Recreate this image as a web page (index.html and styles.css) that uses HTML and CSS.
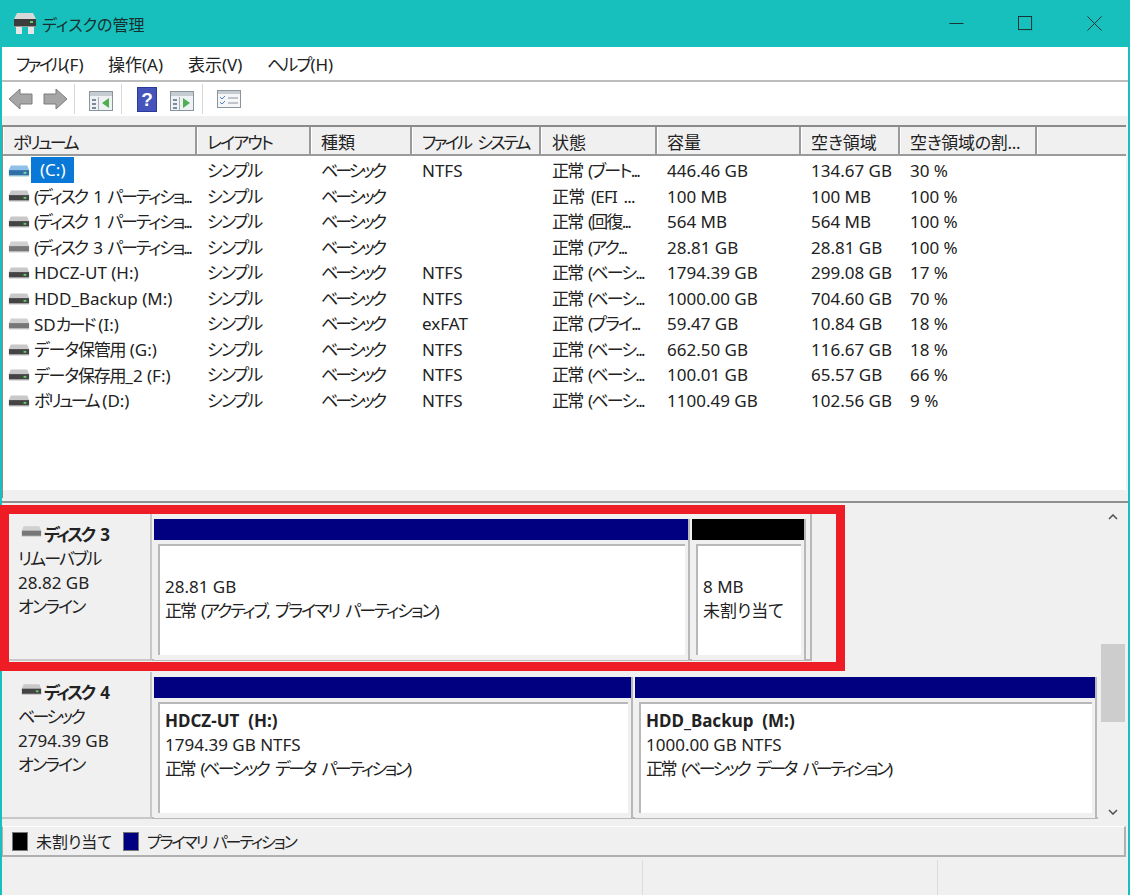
FILE: index.html
```html
<!DOCTYPE html>
<html lang="ja">
<head>
  <meta charset="UTF-8">
  <title>ディスクの管理</title>
  <link rel="stylesheet" href="styles.css">
</head>
<body>
  <svg class="defs" width="0" height="0">
    <symbol id="drive" viewBox="0 0 24 12">
      <path d="M3 0H21L23 5H1Z" fill="#c8c8c8"/>
      <rect x="1" y="5" width="22" height="6" fill="#444"/>
      <rect x="17" y="7" width="3" height="2" fill="#5fd35f"/>
      <rect x="1" y="11" width="22" height="1" fill="#bbb"/>
    </symbol>
    <symbol id="drive-blue" viewBox="0 0 24 12">
      <path d="M3 0H21L23 5H1Z" fill="#8fc0e8"/>
      <rect x="1" y="5" width="22" height="6" fill="#2f6ea8"/>
      <rect x="17" y="7" width="3" height="2" fill="#7fe0a0"/>
      <rect x="1" y="11" width="22" height="1" fill="#9cc"/>
    </symbol>
    <symbol id="drive-gray" viewBox="0 0 24 12">
      <path d="M3 0H21L23 5H1Z" fill="#d0d0d0"/>
      <rect x="1" y="5" width="22" height="6" fill="#777"/>
      <rect x="1" y="11" width="22" height="1" fill="#ccc"/>
    </symbol>
    <symbol id="panel" viewBox="0 0 24 20">
      <rect x="0.5" y="0.5" width="23" height="19" fill="#eef2f5" stroke="#8a949c"/>
      <rect x="1" y="1" width="22" height="4" fill="#c4ccd2"/>
      <rect x="3" y="8" width="4" height="2" fill="#7d8c9c"/>
      <rect x="3" y="12" width="4" height="2" fill="#7d8c9c"/>
      <rect x="3" y="16" width="4" height="2" fill="#7d8c9c"/>
      <rect x="9" y="6" width="1" height="13" fill="#a8b0b6"/>
    </symbol>
  </svg>

  <div class="window">
    <header class="titlebar">
      <svg class="app-icon" viewBox="0 0 24 21">
        <path d="M4 0H20L23 6H1Z" fill="#d8d8d8"/>
        <rect x="1" y="6" width="22" height="7" fill="#3c3c3c"/>
        <rect x="17" y="8" width="3" height="2" fill="#5fd35f"/>
        <rect x="1" y="13" width="22" height="1" fill="#999"/>
        <rect x="3" y="14" width="6" height="7" fill="#e6e6e6"/>
        <rect x="15" y="14" width="6" height="7" fill="#e6e6e6"/>
      </svg>
      <span class="title-text">ディスクの管理</span>
      <div class="window-btns">
        <svg viewBox="0 0 16 16"><path d="M0.5 8H15.5" stroke="#1b2a2a" fill="none"/></svg>
        <svg viewBox="0 0 16 16"><rect x="0.5" y="0.5" width="14" height="14" stroke="#1b2a2a" fill="none"/></svg>
        <svg viewBox="0 0 16 16"><path d="M0.5 0.5L15.5 15.5M15.5 0.5L0.5 15.5" stroke="#1b2a2a" fill="none"/></svg>
      </div>
    </header>

    <nav class="menubar">
      <span class="menu-item menu-file"><i class="t3">ファイル</i>(F)</span>
      <span class="menu-item menu-action">操作(A)</span>
      <span class="menu-item menu-view">表示(V)</span>
      <span class="menu-item"><i class="t2">ヘルプ</i>(H)</span>
    </nav>

    <div class="toolbar">
      <svg class="tool-arrow" viewBox="0 0 25 22"><path d="M1 11L12 1V6H24V16H12V21Z" fill="#a6a6a6" stroke="#7c7c7c"/></svg>
      <svg class="tool-arrow tool-next" viewBox="0 0 25 22"><path d="M24 11L13 1V6H1V16H13V21Z" fill="#a6a6a6" stroke="#7c7c7c"/></svg>
      <span class="tool-sep sep-a"></span>
      <svg class="tool-panel"><use href="#panel"/><path d="M20 7V17L13 12Z" fill="#4fae4f"/></svg>
      <span class="tool-sep sep-b"></span>
      <svg class="tool-help" viewBox="0 0 20 25">
        <rect width="20" height="25" fill="#2a3a96"/>
        <rect x="1" y="1" width="18" height="23" fill="#4454bc"/>
        <text x="10" y="19" class="help-mark">?</text>
      </svg>
      <svg class="tool-panel tool-panel-2"><use href="#panel"/><path d="M13 7V17L20 12Z" fill="#4fae4f"/></svg>
      <span class="tool-sep sep-c"></span>
      <svg class="tool-list" viewBox="0 0 24 18">
        <rect x="0.5" y="0.5" width="23" height="17" fill="#f4f6f8" stroke="#8a949c"/>
        <rect x="1" y="1" width="22" height="3" fill="#c4ccd2"/>
        <path d="M3 7L5 9L8 6M3 12L5 14L8 11" stroke="#4a7fc0" fill="none"/>
        <path d="M11 8H21M11 13H21" stroke="#8a949c"/>
      </svg>
    </div>
    <div class="toolbar-gap"></div>

    <section class="volume-list">
      <div class="list-head">
        <span class="t3">ボリューム</span><span class="t2">レイアウト</span><span>種類</span><span class="t3">ファイル システム</span><span class="head-state">状態</span><span>容量</span><span>空き領域</span><span class="t0">空き領域の割...</span><span></span>
      </div>
      <div class="list-row">
        <span class="vol"><svg class="drive-icon"><use href="#drive-blue"/></svg><b class="selected">(C:)</b></span><span>シンプル</span><span>ベーシック</span><span>NTFS</span><span>正常 (ブート...</span><span>446.46 GB</span><span>134.67 GB</span><span>30 %</span>
      </div>
      <div class="list-row">
        <span class="vol t2x"><svg class="drive-icon"><use href="#drive"/></svg>(ディスク 1 パーティショ...</span><span>シンプル</span><span>ベーシック</span><span></span><span class="state-latin">正常 (EFI ...</span><span>100 MB</span><span>100 MB</span><span>100 %</span>
      </div>
      <div class="list-row">
        <span class="vol t2x"><svg class="drive-icon"><use href="#drive"/></svg>(ディスク 1 パーティショ...</span><span>シンプル</span><span>ベーシック</span><span></span><span>正常 (回復...</span><span>564 MB</span><span>564 MB</span><span>100 %</span>
      </div>
      <div class="list-row">
        <span class="vol t2x"><svg class="drive-icon"><use href="#drive-gray"/></svg>(ディスク 3 パーティショ...</span><span>シンプル</span><span>ベーシック</span><span></span><span>正常 (アク...</span><span>28.81 GB</span><span>28.81 GB</span><span>100 %</span>
      </div>
      <div class="list-row">
        <span class="vol"><svg class="drive-icon"><use href="#drive"/></svg>HDCZ-UT (H:)</span><span>シンプル</span><span>ベーシック</span><span>NTFS</span><span>正常 (ベーシ...</span><span>1794.39 GB</span><span>299.08 GB</span><span>17 %</span>
      </div>
      <div class="list-row">
        <span class="vol"><svg class="drive-icon"><use href="#drive"/></svg>HDD_Backup (M:)</span><span>シンプル</span><span>ベーシック</span><span>NTFS</span><span>正常 (ベーシ...</span><span>1000.00 GB</span><span>704.60 GB</span><span>70 %</span>
      </div>
      <div class="list-row">
        <span class="vol"><svg class="drive-icon"><use href="#drive-gray"/></svg><em class="vol-name">SD<i class="t3">カード</i> (I:)</em></span><span>シンプル</span><span>ベーシック</span><span>exFAT</span><span>正常 (プライ...</span><span>59.47 GB</span><span>10.84 GB</span><span>18 %</span>
      </div>
      <div class="list-row">
        <span class="vol"><svg class="drive-icon"><use href="#drive"/></svg><em class="vol-name"><i class="t1">データ保管用</i> (G:)</em></span><span>シンプル</span><span>ベーシック</span><span>NTFS</span><span>正常 (ベーシ...</span><span>662.50 GB</span><span>116.67 GB</span><span>18 %</span>
      </div>
      <div class="list-row">
        <span class="vol"><svg class="drive-icon"><use href="#drive"/></svg><em class="vol-name"><i class="t1">データ保存用</i>_2 (F:)</em></span><span>シンプル</span><span>ベーシック</span><span>NTFS</span><span>正常 (ベーシ...</span><span>100.01 GB</span><span>65.57 GB</span><span>66 %</span>
      </div>
      <div class="list-row">
        <span class="vol"><svg class="drive-icon"><use href="#drive"/></svg><em class="vol-name"><i class="t3">ボリューム</i> (D:)</em></span><span>シンプル</span><span>ベーシック</span><span>NTFS</span><span>正常 (ベーシ...</span><span>1100.49 GB</span><span>102.56 GB</span><span>9 %</span>
      </div>
      <div class="list-foot"></div>
    </section>

    <section class="disk-pane">
      <div class="disks">
        <div class="disk disk-removable">
          <div class="disk-label">
            <div class="disk-name t3"><svg class="disk-icon"><use href="#drive-gray"/></svg>ディスク 3</div>
            <div class="t2">リムーバブル</div>
            <div>28.82 GB</div>
            <div class="t2">オンライン</div>
          </div>
          <div class="disk-parts">
            <div class="part part-c1">
              <div class="part-bar"></div>
              <div class="part-body part-center">
                <div>28.81 GB</div>
                <div class="t2x">正常 (アクティブ, プライマリ パーティション)</div>
              </div>
            </div>
            <div class="part part-c2">
              <div class="part-bar part-black"></div>
              <div class="part-body part-center">
                <div>8 MB</div>
                <div>未割り当て</div>
              </div>
            </div>
          </div>
        </div>
        <div class="disk disk-basic">
          <div class="disk-label">
            <div class="disk-name t3"><svg class="disk-icon"><use href="#drive"/></svg>ディスク 4</div>
            <div class="t3">ベーシック</div>
            <div>2794.39 GB</div>
            <div class="t2">オンライン</div>
          </div>
          <div class="disk-parts">
            <div class="part part-d1">
              <div class="part-bar"></div>
              <div class="part-body">
                <div class="part-name">HDCZ-UT &nbsp;(H:)</div>
                <div>1794.39 GB NTFS</div>
                <div class="t3">正常 (ベーシック データ パーティション)</div>
              </div>
            </div>
            <div class="part part-d2">
              <div class="part-bar"></div>
              <div class="part-body">
                <div class="part-name">HDD_Backup &nbsp;(M:)</div>
                <div>1000.00 GB NTFS</div>
                <div class="t3">正常 (ベーシック データ パーティション)</div>
              </div>
            </div>
          </div>
        </div>
      </div>
      <div class="scrollbar">
        <svg class="scroll-arrow" viewBox="0 0 10 6"><path d="M1 5L5 1L9 5" fill="none" stroke="#555" stroke-width="1.6"/></svg>
        <div class="scroll-thumb"></div>
        <svg class="scroll-arrow scroll-down" viewBox="0 0 10 6"><path d="M1 1L5 5L9 1" fill="none" stroke="#555" stroke-width="1.6"/></svg>
      </div>
    </section>

    <div class="legend">
      <span class="swatch swatch-black"></span><span class="legend-text">未割り当て</span>
      <span class="swatch swatch-blue"></span><span class="t2x">プライマリ パーティション</span>
    </div>

    <footer class="statusbar">
      <span class="status-cell status-1"></span>
      <span class="status-cell status-2"></span>
      <span class="status-cell"></span>
    </footer>
  </div>

  <div class="highlight"></div>
</body>
</html>
```

FILE: styles.css
```css
* {
  box-sizing: border-box;
}
html, body {
  margin: 0;
  height: 895px;
  overflow: hidden;
}
body {
  position: relative;
  background: #17c0bc;
  color: #222;
  font-family: "Noto Sans", "Noto Sans CJK JP", sans-serif;
  font-size: 17px;
  font-feature-settings: "palt";
}
i, em {
  font-style: normal;
}
.defs {
  position: absolute;
}
.window {
  display: flex;
  flex-direction: column;
  height: 895px;
  border-left: 2px solid #17c0bc;
  border-right: 2px solid #17c0bc;
  background: #f0f0f0;
}

/* kana in the original font runs much narrower than Noto */
.t0 {
  letter-spacing: -0.3px;
}
.t1 {
  letter-spacing: -1.2px;
  word-spacing: 3px;
}
.t2 {
  letter-spacing: -1.8px;
  word-spacing: 4px;
}
.t2x {
  letter-spacing: -2.1px;
  word-spacing: 4px;
}
.t3 {
  letter-spacing: -2.6px;
  word-spacing: 5px;
}

/* title */
.titlebar {
  display: flex;
  align-items: center;
  height: 47px;
  padding-left: 11px;
  background: #17c0bc;
  color: #17302f;
  flex: none;
}
.app-icon {
  width: 24px;
  height: 21px;
}
.title-text {
  margin-left: 5px;
  font-size: 16px;
}
.window-btns {
  display: flex;
  margin-left: auto;
  gap: 54px;
  padding-right: 26px;
  align-items: center;
}
.window-btns svg {
  width: 15px;
  height: 15px;
}

/* menu */
.menubar {
  display: flex;
  align-items: center;
  height: 35px;
  padding: 0 0 1px 14px;
  background: #fff;
  border-bottom: 2px solid #bdbdbd;
  flex: none;
}
.menu-file {
  width: 92px;
}
.menu-action {
  width: 80px;
}
.menu-view {
  width: 79px;
}

/* toolbar */
.toolbar {
  display: flex;
  align-items: center;
  height: 34px;
  padding-left: 6px;
  background: #fff;
  flex: none;
}
.tool-arrow {
  width: 25px;
  height: 22px;
}
.tool-next {
  margin-left: 10px;
}
.tool-sep {
  width: 1px;
  height: 30px;
  background: #d8d8d8;
}
.sep-a {
  margin-left: 6px;
}
.tool-panel {
  width: 24px;
  height: 20px;
  margin: 4px 0 0 14px;
}
.sep-b {
  margin-left: 8px;
}
.tool-help {
  width: 20px;
  height: 25px;
  margin-left: 15px;
}
.tool-panel-2 {
  margin-left: 13px;
}
.sep-c {
  margin-left: 8px;
}
.tool-list {
  width: 24px;
  height: 18px;
  margin-left: 14px;
}
.help-mark {
  fill: #fff;
  font-family: "Liberation Sans", sans-serif;
  font-size: 19px;
  font-weight: bold;
  text-anchor: middle;
}
.toolbar-gap {
  height: 9px;
  background: #f0f0f0;
  flex: none;
}

/* volume list */
.volume-list {
  display: flex;
  flex-direction: column;
  height: 373px;
  margin-right: 2px;
  padding-left: 2px;
  background: #fff;
  border-left: 1px solid #8c8c8c;
  flex: none;
}
.list-head, .list-row {
  display: grid;
  grid-template-columns: 192px 114px 101px 129px 116px 144px 99px 137px 1fr;
}
.list-head {
  grid-template-columns: 194px 114px 101px 129px 116px 144px 99px 137px 1fr;
  height: 31px;
  margin: 0 0 2px -2px;
  border-top: 2px solid #8a8a8a;
  border-bottom: 2px solid #9a9a9a;
  background: #f0f0f0;
  flex: none;
}
.list-head span {
  padding: 4px 0 0 9px;
  border-right: 2px solid #9a9a9a;
  border-left: 1px solid #fff;
  white-space: nowrap;
  overflow: hidden;
  line-height: 24px;
}
.list-head span:last-child {
  border-right: none;
}
.list-head .head-state {
  padding-left: 10px;
}
.list-row {
  height: 25.55px;
  line-height: 25px;
  flex: none;
}
.list-row span {
  padding-left: 10px;
  white-space: nowrap;
}
.list-row span:nth-child(2) {
  letter-spacing: -1.9px;
}
.list-row span:nth-child(3) {
  letter-spacing: -3px;
}
.list-row span:nth-child(5) {
  padding-left: 11px;
  letter-spacing: -1.8px;
  word-spacing: 3px;
}
.list-row .state-latin:nth-child(5) {
  letter-spacing: -0.8px;
}
.list-row .vol {
  display: flex;
  align-items: center;
  padding-left: 3px;
}
.vol-name {
  white-space: pre;
}
.list-foot {
  height: 8px;
  margin: auto 0 0 -2px;
  background: #f0f0f0;
  flex: none;
}
.drive-icon {
  width: 22px;
  height: 12px;
  margin-right: 4px;
  flex: none;
}
.selected {
  font-weight: normal;
  background: #0a78d7;
  color: #fff;
  height: 26px;
  margin: -1px 0 0 -3px;
  padding: 0 8px 0 9px;
}

/* lower pane */
.disk-pane {
  display: flex;
  height: 325px;
  margin-top: 3px;
  border-top: 2px solid #8f8f8f;
  background: #f0f0f0;
  flex: none;
}
.disks {
  width: 1096px;
}
.disk {
  display: flex;
  height: 147px;
  margin-bottom: 11px;
}
.disk-removable {
  margin-top: 11px;
}
.disk-label {
  width: 150px;
  padding: 9px 0 0 16px;
  line-height: 24px;
  border-right: 2px solid #c8c8c8;
  border-bottom: 2px solid #c8c8c8;
  flex: none;
}
.disk-name {
  display: flex;
  align-items: center;
  font-weight: bold;
}
.disk-icon {
  width: 21px;
  height: 11px;
  margin: 0 2px 8px 3px;
}
.disk-parts {
  display: flex;
  flex: 1;
  gap: 2px;
  padding: 5px 0 0 2px;
  border-bottom: 2px solid #b8b8b8;
}
.disk-removable .disk-parts {
  width: 660px;
  flex: none;
  border-right: 2px solid #b8b8b8;
  padding-right: 4px;
}
.part {
  display: flex;
  flex-direction: column;
  height: 141px;
  border-right: 2px solid #b8b8b8;
  background: #f0f0f0;
}
.part-c1 {
  width: 536px;
}
.part-c2 {
  width: 114px;
}
.part-d1 {
  width: 479px;
}
.part-d2 {
  width: 462px;
}
.part-bar {
  height: 21px;
  background: #000080;
  flex: none;
}
.part-black {
  background: #000;
}
.part-body {
  flex: 1;
  margin: 4px 3px 5px 4px;
  padding: 5px 0 0 5px;
  border-top: 2px solid #b8b8b8;
  border-left: 2px solid #b8b8b8;
  background: #fff;
  line-height: 24px;
  white-space: nowrap;
}
.part-center {
  display: flex;
  flex-direction: column;
  justify-content: center;
  padding-top: 0;
  padding-bottom: 4px;
}
.part-name {
  font-weight: bold;
}

/* scrollbar */
.scrollbar {
  display: flex;
  flex-direction: column;
  align-items: center;
  width: 26px;
  margin-left: 2px;
  padding-top: 11px;
}
.scroll-arrow {
  width: 10px;
  height: 6px;
  flex: none;
}
.scroll-thumb {
  width: 24px;
  height: 78px;
  margin-top: 124px;
  background: #cdcdcd;
  flex: none;
}
.scroll-down {
  margin-top: 87px;
}

/* legend, status */
.legend {
  display: flex;
  align-items: center;
  height: 31px;
  margin-right: 2px;
  padding-left: 9px;
  font-size: 16px;
  background: #f0f0f0;
  border-top: 1px solid #fff;
  border-right: 2px solid #b0b0b0;
  border-bottom: 2px solid #b0b0b0;
  border-left: 1px solid #b0b0b0;
  flex: none;
}
.swatch {
  width: 16px;
  height: 19px;
  margin-right: 8px;
  border: 1px solid #777;
  flex: none;
}
.swatch-black {
  background: #000;
}
.swatch-blue {
  background: #000080;
}
.legend-text {
  margin-right: 11px;
}
.statusbar {
  display: flex;
  flex: 1;
  margin-top: 3px;
  background: #f0f0f0;
}
.status-cell {
  flex: 1;
}
.status-1 {
  flex: none;
  width: 641px;
  border-right: 1px solid #dcdcdc;
}
.status-2 {
  flex: none;
  width: 295px;
  border-right: 1px solid #dcdcdc;
}

/* red annotation drawn over the screenshot */
.highlight {
  position: absolute;
  left: 0;
  top: 505px;
  width: 845px;
  height: 166px;
  border: 9px solid #ee1c25;
}
```
